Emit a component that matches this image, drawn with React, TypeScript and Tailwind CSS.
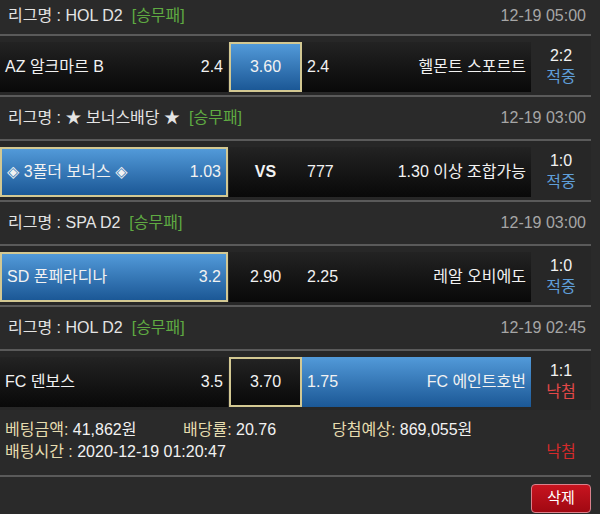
import React from "react";

type Side = { text: string; odds?: string; style: "dark" | "blue"; sel?: boolean };

const FONT = { fontFamily: '"Liberation Sans", "Noto Sans CJK KR", "DejaVu Sans", sans-serif' };

function cellCls(style: "dark" | "blue", sel?: boolean) {
  const bg =
    style === "blue"
      ? "bg-linear-to-b from-[#529ad9] to-[#1b5896]"
      : "bg-linear-to-b from-[#232323] to-[#090909]";
  const border = sel ? "border-2 border-[#d3c892]" : "";
  return `${bg} ${border} h-[50px] flex items-center text-[16px] text-[#f2f2f2]`;
}

function Header({ league, date, first }: { league: string; date: string; first?: boolean }) {
  return (
    <div
      className={`${first ? "h-[34px] pb-[2px]" : "h-[42px]"} flex items-center justify-between pl-[8px] pr-[5px] bg-[#2a2a2a] text-[16px]`}
    >
      <div className="text-[#e4e4e4]">
        {league}
        <span className="ml-[9px] text-[#5faa42]">[승무패]</span>
      </div>
      <div className="text-[#a6a6a6]">{date}</div>
    </div>
  );
}

function Sep() {
  return <div className="h-[2px] bg-[#5a5a5a]" />;
}

function MatchRow({
  home,
  draw,
  away,
  score,
  result,
}: {
  home: Side;
  draw: { text: string; style: "dark" | "blue"; sel?: boolean; bold?: boolean };
  away: Side;
  score: string;
  result: "적중" | "낙첨";
}) {
  return (
    <div className="flex items-start pt-[6px] pb-[3px] bg-[#272727]">
      <div className={`w-[228px] ${cellCls(home.style, home.sel)} justify-between pl-[5px] pr-[5px]`}>
        <span>{home.text}</span>
        <span>{home.odds}</span>
      </div>
      <div className="w-[1px]" />
      <div className={`w-[73px] ${cellCls(draw.style, draw.sel)} justify-center ${draw.bold ? "font-bold" : ""}`}>
        {draw.text}
      </div>
      <div className={`w-[229px] ${cellCls(away.style, away.sel)} justify-between pl-[5px] pr-[5px]`}>
        <span>{away.odds}</span>
        <span>{away.text}</span>
      </div>
      <div className="w-[60px] h-[50px] flex flex-col items-center justify-center text-[16px] leading-[21px] pb-[2px]">
        <span className="text-[#f2f2f2]">{score}</span>
        <span className={result === "적중" ? "text-[#5f9fd9]" : "text-[#e34848]"}>{result}</span>
      </div>
    </div>
  );
}

export default function App() {
  return (
    <div className="w-[600px] h-[514px] bg-[#2a2a2a] overflow-hidden" style={FONT}>
      <div className="w-[591px]">
        <Header league="리그명 : HOL D2" date="12-19 05:00" first />
        <Sep />
        <MatchRow
          home={{ text: "AZ 알크마르 B", odds: "2.4", style: "dark" }}
          draw={{ text: "3.60", style: "blue", sel: true }}
          away={{ text: "헬몬트 스포르트", odds: "2.4", style: "dark" }}
          score="2:2"
          result="적중"
        />
        <Sep />
        <Header league="리그명 : ★ 보너스배당 ★" date="12-19 03:00" />
        <Sep />
        <MatchRow
          home={{ text: "◈ 3폴더 보너스 ◈", odds: "1.03", style: "blue", sel: true }}
          draw={{ text: "VS", style: "dark", bold: true }}
          away={{ text: "1.30 이상 조합가능", odds: "777", style: "dark" }}
          score="1:0"
          result="적중"
        />
        <Sep />
        <Header league="리그명 : SPA D2" date="12-19 03:00" />
        <Sep />
        <MatchRow
          home={{ text: "SD 폰페라디나", odds: "3.2", style: "blue", sel: true }}
          draw={{ text: "2.90", style: "dark" }}
          away={{ text: "레알 오비에도", odds: "2.25", style: "dark" }}
          score="1:0"
          result="적중"
        />
        <Sep />
        <Header league="리그명 : HOL D2" date="12-19 02:45" />
        <Sep />
        <MatchRow
          home={{ text: "FC 덴보스", odds: "3.5", style: "dark" }}
          draw={{ text: "3.70", style: "dark", sel: true }}
          away={{ text: "FC 에인트호번", odds: "1.75", style: "blue" }}
          score="1:1"
          result="낙첨"
        />
        <div className="pt-[9px] pb-[12px] text-[16px] leading-[22px]">
          <div className="flex pl-[5px]">
            <div className="w-[178px]">
              <span className="text-[#e6dcaf]">베팅금액: </span>
              <span className="text-[#f2f2f2]">41,862원</span>
            </div>
            <div className="w-[149px]">
              <span className="text-[#e6dcaf]">배당률: </span>
              <span className="text-[#f2f2f2]">20.76</span>
            </div>
            <div>
              <span className="text-[#e6dcaf]">당첨예상: </span>
              <span className="text-[#f2f2f2]">869,055원</span>
            </div>
          </div>
          <div className="flex items-center">
            <div className="flex-1 pl-[5px]">
              <span className="text-[#e6dcaf]">배팅시간 : </span>
              <span className="text-[#f2f2f2]">2020-12-19 01:20:47</span>
            </div>
            <div className="w-[60px] text-center text-[#d42a2a]">낙첨</div>
          </div>
        </div>
        <Sep />
        <div className="flex justify-end pt-[7px]">
          <button className="w-[60px] h-[29px] rounded-[4px] border border-[#d9818c] bg-linear-to-b from-[#c8141f] to-[#a00812] text-white text-[15px] flex items-center justify-center">
            삭제
          </button>
        </div>
      </div>
    </div>
  );
}
